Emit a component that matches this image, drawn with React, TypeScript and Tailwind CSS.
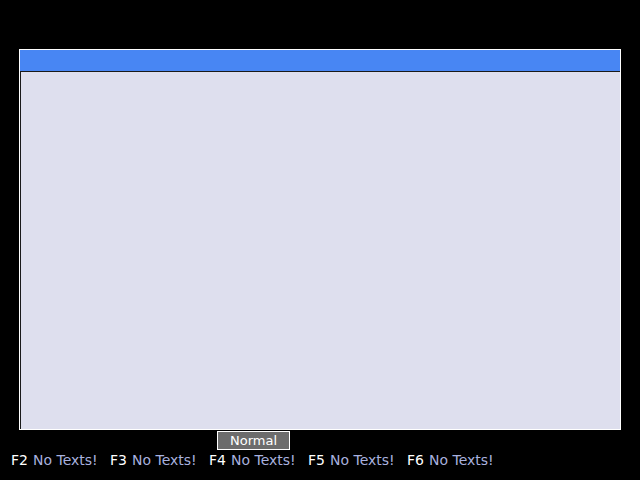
export default function App() {
  const keys = ["F2", "F3", "F4", "F5", "F6"];
  return (
    <div className="w-[640px] h-[480px] bg-black flex flex-col font-['DejaVu_Sans',sans-serif] text-[13px]">
      <div className="mt-[49px] ml-[19px] w-[602px] h-[381px] border border-white flex flex-col">
        <div className="h-[21px] bg-[#4886f3]" />
        <div className="flex-1 bg-[#dedfee] border-t border-l border-[#1a1a1a]" />
      </div>
      <div className="ml-[217px] mt-[1px] w-[73px] h-[19px] border border-white bg-[#6c6c6c] text-white flex items-center justify-center leading-none">
        Normal
      </div>
      <div className="flex ml-[11px] h-[20px] items-center text-[14px]">
        {keys.map((k) => (
          <div key={k} className="w-[99px] flex gap-[5px] whitespace-nowrap">
            <span className="text-white">{k}</span>
            <span className="text-[#a8b1df]">No Texts!</span>
          </div>
        ))}
      </div>
    </div>
  );
}
